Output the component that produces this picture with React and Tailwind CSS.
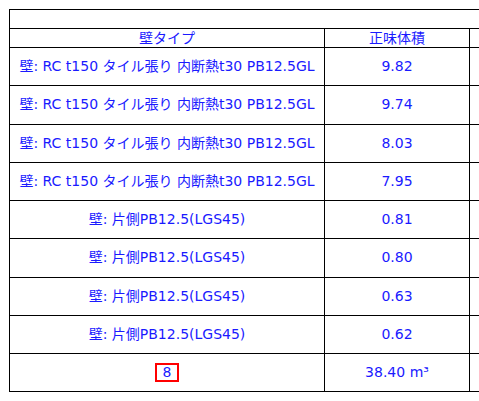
const rows = [
  ["壁: RC t150 タイル張り 内断熱t30 PB12.5GL", "9.82"],
  ["壁: RC t150 タイル張り 内断熱t30 PB12.5GL", "9.74"],
  ["壁: RC t150 タイル張り 内断熱t30 PB12.5GL", "8.03"],
  ["壁: RC t150 タイル張り 内断熱t30 PB12.5GL", "7.95"],
  ["壁: 片側PB12.5(LGS45)", "0.81"],
  ["壁: 片側PB12.5(LGS45)", "0.80"],
  ["壁: 片側PB12.5(LGS45)", "0.63"],
  ["壁: 片側PB12.5(LGS45)", "0.62"],
];

const Row = ({ first, second, tall = true }) => (
  <div className={`flex border-b border-black ${tall ? "h-[38.25px]" : "h-[19px]"}`}>
    <div className="w-[315px] shrink-0 border-r border-black flex items-center justify-center">
      {first}
    </div>
    <div className="w-[145px] shrink-0 border-r border-black flex items-center justify-center">
      {second}
    </div>
    <div className="flex-1" />
  </div>
);

export default function App() {
  return (
    <div
      className="w-[479px] h-[401px] overflow-hidden bg-white pl-[9px] pt-[9px] text-[14px] text-[#1a1aff]"
      style={{ fontFamily: '"DejaVu Sans", "Noto Sans CJK JP", sans-serif' }}
    >
      <div className="w-[600px] border-l border-t border-black">
        <div className="h-[19px] border-b border-black" />
        <Row first="壁タイプ" second="正味体積" tall={false} />
        {rows.map((r, i) => (
          <Row key={i} first={r[0]} second={r[1]} />
        ))}
        <Row
          first={
            <span className="w-[24px] h-[19px] border-2 border-[#ff0000] flex items-center justify-center">
              8
            </span>
          }
          second="38.40 m³"
        />
      </div>
    </div>
  );
}
